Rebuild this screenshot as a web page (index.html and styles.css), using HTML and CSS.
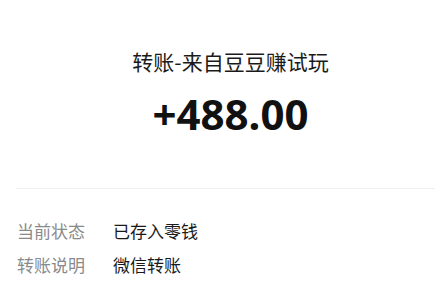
FILE: index.html
```html
<!DOCTYPE html>
<html lang="zh-CN">
<head>
<meta charset="utf-8">
<title>转账详情</title>
<link rel="stylesheet" href="styles.css">
</head>
<body>
<main class="page">
  <section class="summary">
    <div class="title">转账-来自豆豆赚试玩</div>
    <div class="amount">+488.00</div>
  </section>
  <hr class="divider">
  <section class="details">
    <div class="row"><span class="label">当前状态</span><span class="value">已存入零钱</span></div>
    <div class="row"><span class="label">转账说明</span><span class="value">微信转账</span></div>
  </section>
</main>
</body>
</html>
```
FILE: styles.css
```css
html, body {
  margin: 0;
  padding: 0;
  background: #ffffff;
}
.page {
  font-family: "Noto Sans CJK SC", "Noto Sans", sans-serif;
  color: #1a1a1a;
}
.summary {
  display: flex;
  flex-direction: column;
  align-items: center;
  padding: 47px 0 0 26px;
}
.title {
  font-size: 21px;
  line-height: 28px;
  color: #1a1a1a;
}
.amount {
  margin-top: 14px;
  font-family: "Noto Sans", "Noto Sans CJK SC", sans-serif;
  font-weight: 700;
  font-size: 42px;
  line-height: 50px;
  color: #111111;
}
.divider {
  margin: 49px 0 0 16px;
  border: 0;
  height: 1px;
  background: #f0f0f0;
}
.details {
  display: flex;
  flex-direction: column;
  padding: 25px 0 0 17px;
}
.row {
  display: flex;
  font-size: 17px;
  line-height: 34px;
}
.label {
  width: 96px;
  color: #8a8a8a;
}
.value {
  color: #1a1a1a;
}
```
